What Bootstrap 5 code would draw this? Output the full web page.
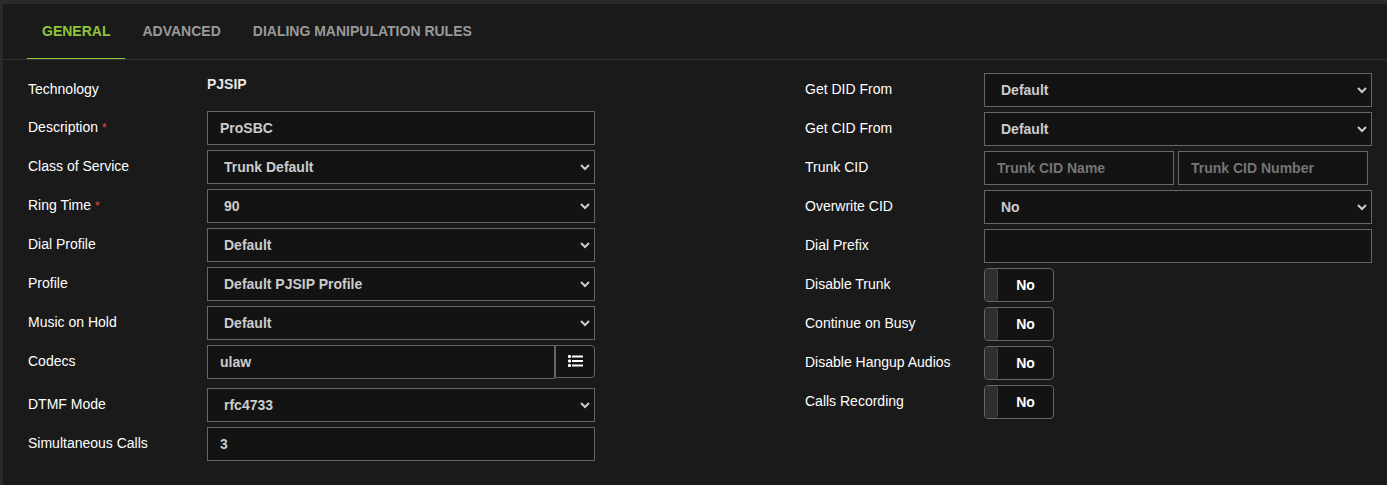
<!DOCTYPE html>
<html lang="en" data-bs-theme="dark">
<head>
<meta charset="utf-8">
<meta name="viewport" content="width=device-width, initial-scale=1">
<title>Trunk settings</title>
<link href="https://cdn.jsdelivr.net/npm/bootstrap@5.3.0/dist/css/bootstrap.min.css" rel="stylesheet">
<style>
body { background: #2a2a2a; color: #fff; font: 14px/20px "Liberation Sans", Arial, sans-serif; }
.panel { background: #1a1a1a; margin: 4px 0 0 3px; border-top-left-radius: 3px; min-height: calc(100vh - 4px); }
.panel-tabs { border-bottom: 1px solid #333; padding-left: 24px; gap: 2px; }
.panel-tabs .nav-link { color: #999; font-weight: 700; line-height: 20px; padding: 17px 15px; border: 0; border-bottom: 1px solid transparent; border-radius: 0; text-transform: uppercase; }
.panel-tabs .nav-link.active { color: #8fc43a; background: none; border-color: #8fc43a; }
.settings { display: grid; grid-template-columns: 1fr 1fr; column-gap: 210px; padding: 13px 15px 24px 25px; }
.field { display: grid; grid-template-columns: 179px 1fr; margin-bottom: 5px; }
.field.spaced { margin-bottom: 9px; }
.field > .caption { padding-top: 6px; }
.field > .static { font-weight: 700; color: #e6e6e6; padding: 1px 0 12px; }
.req { color: #e04b4b; font-size: 12px; }
.settings .form-control, .settings .form-select { height: 34px; background-color: #131313; border: 1px solid #666; border-radius: 0; color: #ccc; font-size: 14px; font-weight: 700; line-height: 20px; padding: 6px 12px; }
.settings .form-control::placeholder { color: #757575; }
.settings .form-select { padding: 6px 24px 6px 16px; background-image: url("data:image/svg+xml,%3Csvg xmlns='http://www.w3.org/2000/svg' viewBox='0 0 10 8'%3E%3Cpath d='M1 2l4 4 4-4' fill='none' stroke='%23ccc' stroke-width='2'/%3E%3C/svg%3E"); background-size: 10px 8px; background-position: right 4px center; }
.list-btn { display: flex; align-items: center; justify-content: center; width: 40px; height: 33px; background: #131313; border: 1px solid #666; border-radius: 0 4px 4px 0; color: #fff; padding: 0 0 2px; }
.pair { display: grid; grid-template-columns: 1fr 1fr; gap: 4px; margin-right: 4px; }
.toggle { display: flex; width: 70px; height: 34px; background: #131313; border: 1px solid #666; border-radius: 4px; overflow: hidden; color: #fff; font-weight: 700; cursor: pointer; }
.toggle .knob { width: 13px; background: #2f2f2f; border-right: 1px solid #4a4a4a; border-radius: 3px; }
.toggle .state { flex: 1; line-height: 32px; text-align: center; }
</style>
</head>
<body>
<main class="panel">
  <ul class="nav panel-tabs">
    <li class="nav-item"><a class="nav-link active" aria-current="page" href="#general">General</a></li>
    <li class="nav-item"><a class="nav-link" href="#advanced">Advanced</a></li>
    <li class="nav-item"><a class="nav-link" href="#rules">Dialing Manipulation Rules</a></li>
  </ul>
  <form class="settings" id="general">
    <div>
      <div class="field"><span class="caption">Technology</span><span class="static">PJSIP</span></div>
      <div class="field"><label class="caption" for="desc">Description <span class="req">*</span></label><input class="form-control" id="desc" type="text" value="ProSBC"></div>
      <div class="field"><label class="caption" for="cos">Class of Service</label><select class="form-select" id="cos"><option>Trunk Default</option></select></div>
      <div class="field"><label class="caption" for="ring">Ring Time <span class="req">*</span></label><select class="form-select" id="ring"><option>90</option></select></div>
      <div class="field"><label class="caption" for="dialp">Dial Profile</label><select class="form-select" id="dialp"><option>Default</option></select></div>
      <div class="field"><label class="caption" for="prof">Profile</label><select class="form-select" id="prof"><option>Default PJSIP Profile</option></select></div>
      <div class="field"><label class="caption" for="moh">Music on Hold</label><select class="form-select" id="moh"><option>Default</option></select></div>
      <div class="field spaced"><label class="caption" for="codecs">Codecs</label>
        <div class="d-flex"><input class="form-control" id="codecs" type="text" value="ulaw"><button class="list-btn flex-shrink-0" type="button" aria-label="Select codecs"><svg width="15" height="12" viewBox="0 0 15 12" fill="currentColor" aria-hidden="true"><rect width="3" height="3" rx="1"/><rect y="4.500" width="3" height="3" rx="1"/><rect y="9" width="3" height="3" rx="1"/><path d="M4 .5h11v2H4zM4 5h11v2H4zM4 9.500h11v2H4z"/></svg></button></div></div>
      <div class="field"><label class="caption" for="dtmf">DTMF Mode</label><select class="form-select" id="dtmf"><option>rfc4733</option></select></div>
      <div class="field"><label class="caption" for="sim">Simultaneous Calls</label><input class="form-control" id="sim" type="text" value="3"></div>
    </div>
    <div>
      <div class="field"><label class="caption" for="did">Get DID From</label><select class="form-select" id="did"><option>Default</option></select></div>
      <div class="field"><label class="caption" for="cid">Get CID From</label><select class="form-select" id="cid"><option>Default</option></select></div>
      <div class="field"><label class="caption" for="cidname">Trunk CID</label><div class="pair"><input class="form-control" id="cidname" type="text" placeholder="Trunk CID Name"><input class="form-control" type="text" placeholder="Trunk CID Number" aria-label="Trunk CID Number"></div></div>
      <div class="field"><label class="caption" for="over">Overwrite CID</label><select class="form-select" id="over"><option>No</option></select></div>
      <div class="field"><label class="caption" for="prefix">Dial Prefix</label><input class="form-control" id="prefix" type="text"></div>
      <div class="field"><label class="caption" for="t1">Disable Trunk</label><label class="toggle"><input class="visually-hidden" type="checkbox" role="switch" id="t1"><span class="knob"></span><span class="state">No</span></label></div>
      <div class="field"><label class="caption" for="t2">Continue on Busy</label><label class="toggle"><input class="visually-hidden" type="checkbox" role="switch" id="t2"><span class="knob"></span><span class="state">No</span></label></div>
      <div class="field"><label class="caption" for="t3">Disable Hangup Audios</label><label class="toggle"><input class="visually-hidden" type="checkbox" role="switch" id="t3"><span class="knob"></span><span class="state">No</span></label></div>
      <div class="field"><label class="caption" for="t4">Calls Recording</label><label class="toggle"><input class="visually-hidden" type="checkbox" role="switch" id="t4"><span class="knob"></span><span class="state">No</span></label></div>
    </div>
  </form>
</main>
<script src="https://cdn.jsdelivr.net/npm/bootstrap@5.3.0/dist/js/bootstrap.bundle.min.js"></script>
</body>
</html>
